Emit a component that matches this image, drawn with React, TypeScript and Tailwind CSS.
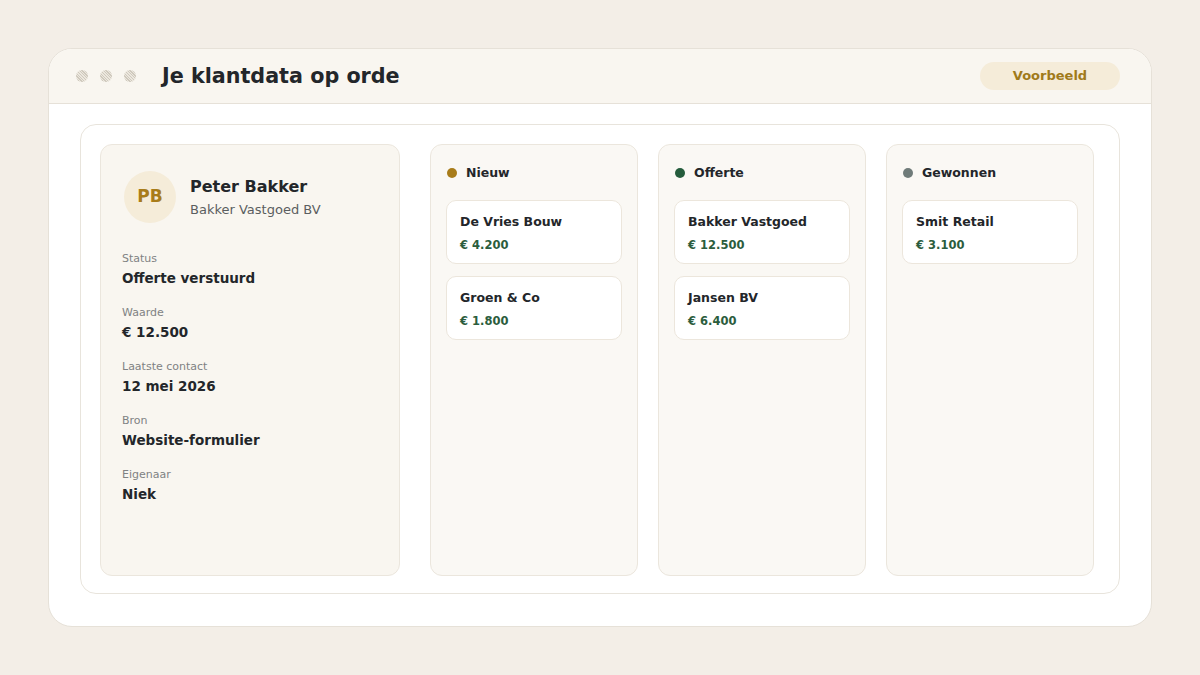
import React from "react";

const font = { fontFamily: '"DejaVu Sans", "Liberation Sans", sans-serif' };

const fields = [
  { label: "Status", value: "Offerte verstuurd" },
  { label: "Waarde", value: "€ 12.500" },
  { label: "Laatste contact", value: "12 mei 2026" },
  { label: "Bron", value: "Website-formulier" },
  { label: "Eigenaar", value: "Niek" },
];

const columns = [
  {
    title: "Nieuw",
    dot: "bg-[#a87c1a]",
    cards: [
      { name: "De Vries Bouw", amount: "€ 4.200" },
      { name: "Groen & Co", amount: "€ 1.800" },
    ],
  },
  {
    title: "Offerte",
    dot: "bg-[#245c3c]",
    cards: [
      { name: "Bakker Vastgoed", amount: "€ 12.500" },
      { name: "Jansen BV", amount: "€ 6.400" },
    ],
  },
  {
    title: "Gewonnen",
    dot: "bg-[#6f7b79]",
    cards: [{ name: "Smit Retail", amount: "€ 3.100" }],
  },
];

function Dot() {
  return (
    <div className="w-[12px] h-[12px] rounded-full bg-[repeating-linear-gradient(45deg,#cfc9bd_0px,#cfc9bd_1px,#ece7de_1px,#ece7de_2px)]" />
  );
}

export default function App() {
  return (
    <div style={font} className="w-[1200px] h-[675px] bg-[#f3eee7] p-[48px] text-[#23262a]">
      <div className="w-[1104px] h-[579px] bg-white rounded-[24px] border border-[#e6e1d8] overflow-hidden flex flex-col">
        <div className="h-[55px] shrink-0 bg-[#f9f6f0] border-b border-[#e6e1d8] flex items-center pl-[27px] pr-[31px]">
          <div className="flex items-center gap-[12px]">
            <Dot />
            <Dot />
            <Dot />
          </div>
          <div className="ml-[26px] text-[20.7px] font-bold leading-[26px]">Je klantdata op orde</div>
          <div className="ml-auto w-[140px] h-[28px] rounded-full bg-[#f5ecd9] text-[#a07a1a] text-[13px] font-bold flex items-center justify-center">
            Voorbeeld
          </div>
        </div>
        <div className="pt-[20px] px-[31px]">
          <div className="h-[470px] rounded-[16px] border border-[#e8e4dc] p-[19px] flex">
            <div className="w-[300px] h-[432px] shrink-0 mr-[30px] rounded-[12px] border border-[#ebe6dd] bg-[#f9f6f0] pl-[21px] pt-[26px]">
              <div className="flex items-center pl-[2px]">
                <div className="w-[52px] h-[52px] rounded-full bg-[#f5ecd9] text-[#a87c1a] font-bold text-[17px] flex items-center justify-center">
                  PB
                </div>
                <div className="ml-[14px] flex flex-col">
                  <div className="text-[16px] font-bold leading-[20px]">Peter Bakker</div>
                  <div className="text-[13px] leading-[16px] mt-[5px] text-[#5b5e60]">Bakker Vastgoed BV</div>
                </div>
              </div>
              <div className="mt-[29px] flex flex-col gap-[19px]">
                {fields.map((f) => (
                  <div key={f.label}>
                    <div className="text-[11px] leading-[14px] text-[#808283]">{f.label}</div>
                    <div className="mt-[3px] text-[13.5px] leading-[18px] font-bold">{f.value}</div>
                  </div>
                ))}
              </div>
            </div>
            <div className="flex gap-[20px]">
              {columns.map((c) => (
                <div
                  key={c.title}
                  className="w-[208px] h-[432px] rounded-[12px] border border-[#ebe6dd] bg-[#faf8f4] px-[15px] pt-[16px]"
                >
                  <div className="h-[24px] flex items-center pl-[1px]">
                    <div className={`w-[10px] h-[10px] rounded-full ${c.dot}`} />
                    <div className="ml-[9px] text-[12.5px] font-bold">{c.title}</div>
                  </div>
                  <div className="mt-[15px] flex flex-col gap-[12px]">
                    {c.cards.map((card) => (
                      <div
                        key={card.name}
                        className="h-[64px] rounded-[10px] border border-[#ece6dc] bg-white px-[13px] pt-[13px]"
                      >
                        <div className="text-[12.5px] font-bold leading-[16px]">{card.name}</div>
                        <div className="mt-[8px] text-[11.5px] font-bold leading-[14px] text-[#2b5d3d]">{card.amount}</div>
                      </div>
                    ))}
                  </div>
                </div>
              ))}
            </div>
          </div>
        </div>
      </div>
    </div>
  );
}
